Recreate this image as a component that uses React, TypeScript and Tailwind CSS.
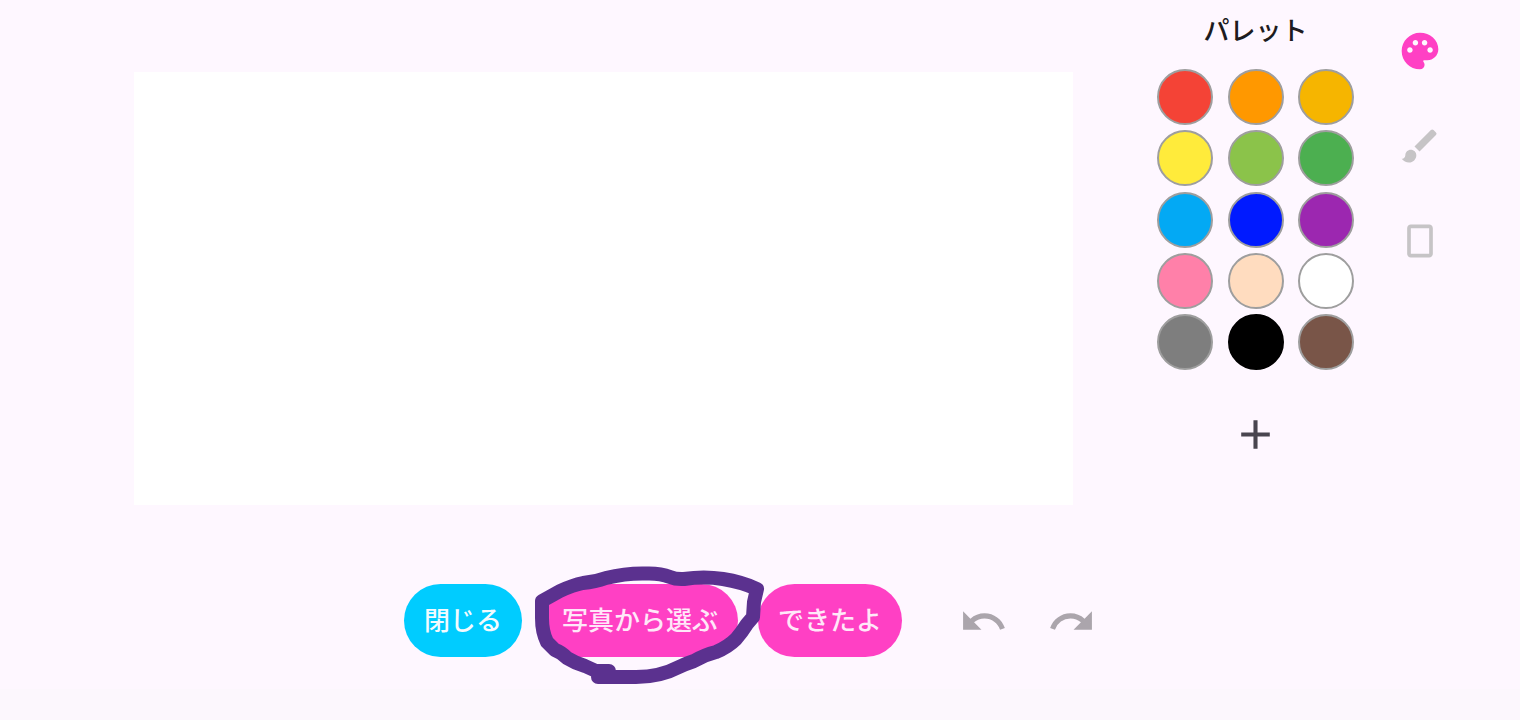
import { useState } from "react";
import { MdAdd, MdBrush, MdCropPortrait, MdPalette, MdRedo, MdUndo } from "react-icons/md";

const swatches = [
  { name: "赤", color: "bg-[#f44336]" },
  { name: "オレンジ", color: "bg-[#ff9800]" },
  { name: "山吹", color: "bg-[#f6b500]" },
  { name: "黄", color: "bg-[#ffeb3b]" },
  { name: "黄緑", color: "bg-[#8bc34a]" },
  { name: "緑", color: "bg-[#4caf50]" },
  { name: "水色", color: "bg-[#03a9f4]" },
  { name: "青", color: "bg-[#001aff]" },
  { name: "紫", color: "bg-[#9c27b0]" },
  { name: "ピンク", color: "bg-[#ff80a9]" },
  { name: "肌色", color: "bg-[#ffdcbf]" },
  { name: "白", color: "bg-white" },
  { name: "灰", color: "bg-[#7e7e7e]" },
  { name: "黒", color: "bg-black" },
  { name: "茶", color: "bg-[#795548]" },
];

const tools = [
  { id: "palette", label: "パレット", Icon: MdPalette },
  { id: "brush", label: "ブラシ", Icon: MdBrush },
  { id: "paper", label: "用紙", Icon: MdCropPortrait },
];

function HandDrawnRing() {
  return (
    <svg
      className="pointer-events-none absolute -top-6 -left-3 z-10 h-[130px] w-[240px] max-w-none"
      viewBox="530 560 240 130"
      fill="none"
      stroke="#5b318f"
      strokeWidth="14"
      strokeLinecap="round"
      strokeLinejoin="round"
      aria-hidden="true"
    >
      <path d="M609 671 L596 671 L585 666 Q575 663 567 658 Q561 652 555 650 Q550 645 547 642 Q542 632 542 618 L542 601 L560 591 Q573 585 583 583 Q595 582 606 578 Q626 573 646 573.500 Q660 573 670 577 Q676 579.500 684 579 Q704 576 723 579 Q742 582 757 589 L754 602 L753 617 L747 624 Q742 632 736 639 Q728 647 716 652 Q704 655 694 661 Q685 664 679 667 Q660 677 636 677 L598 677" />
    </svg>
  );
}

export default function App() {
  const [tool, setTool] = useState("palette");
  const pill = "h-[73px] rounded-full px-5 pb-[3px] text-[26px] leading-9 font-medium whitespace-nowrap";

  return (
    <div className="flex min-h-screen flex-col bg-[#fef7ff] font-['Noto_Sans_CJK_JP',sans-serif] text-[#1d1b20]">
      <main className="flex items-start pr-[78px] pl-[134px]">
        <div className="mt-[72px] aspect-[939/433] min-w-0 flex-1 bg-white" />

        <section className="ml-[84px] flex w-[197px] shrink-0 flex-col items-center pt-[11px]">
          <h1 className="text-[26px] leading-9 font-medium">パレット</h1>
          <div className="mt-[22px] grid h-[301px] w-full grid-cols-[repeat(3,56px)] content-between justify-between">
            {swatches.map((s) => (
              <button
                key={s.name}
                aria-label={s.name}
                className={`size-14 rounded-full border-2 ${s.name === "黒" ? "border-black" : "border-[#9e9e9e]"} ${s.color}`}
              />
            ))}
          </div>
          <button aria-label="色を追加" className="mt-10 text-[#49454f]">
            <MdAdd size={49} />
          </button>
        </section>

        <nav className="ml-11 flex shrink-0 flex-col gap-[51px] pt-[29px]">
          {tools.map(({ id, label, Icon }) => (
            <button
              key={id}
              aria-label={label}
              onClick={() => setTool(id)}
              className={tool === id ? "text-[#ff40c4]" : "text-[#c6c4c6]"}
            >
              <Icon size={44} />
            </button>
          ))}
        </nav>
      </main>

      <footer className="mt-[79px] flex items-center justify-center pr-5">
        <div className="flex gap-5">
          <button className={`${pill} bg-[#00ccff] text-[#f3fbff]`}>閉じる</button>
          <div className="relative">
            <button className={`${pill} bg-[#ff40c4] text-[#ffe8f9]`}>写真から選ぶ</button>
            <HandDrawnRing />
          </div>
          <button className={`${pill} bg-[#ff40c4] text-[#ffe8f9]`}>できたよ</button>
        </div>
        <div className="ml-[57px] flex gap-[39px] pt-0.5 text-[#aba5ac]">
          <button aria-label="元に戻す">
            <MdUndo size={49} />
          </button>
          <button aria-label="やり直す">
            <MdRedo size={49} />
          </button>
        </div>
      </footer>

      <div className="mt-8 flex-1 bg-[#fcf7fd]" />
    </div>
  );
}
